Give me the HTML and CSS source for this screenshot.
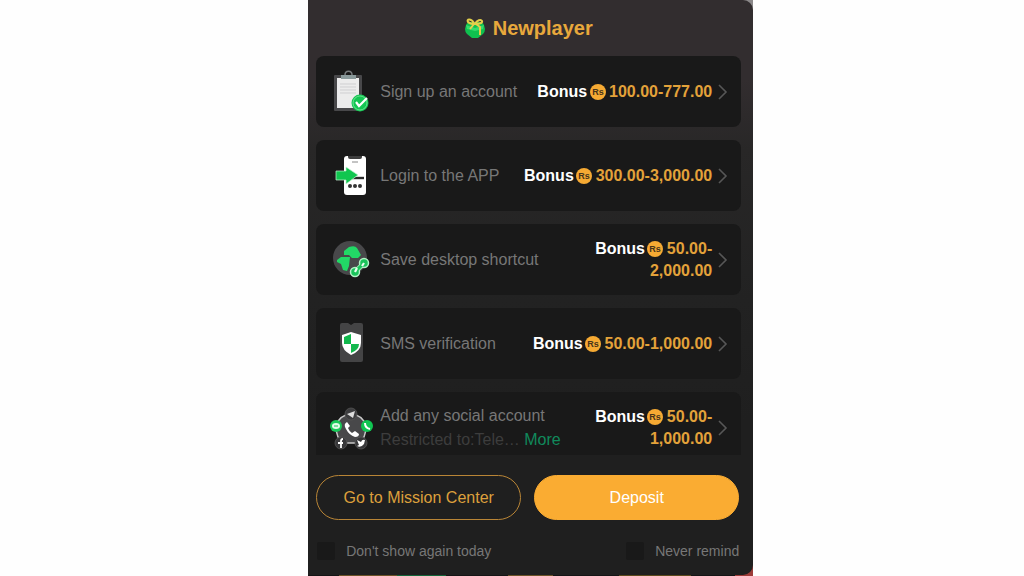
FILE: index.html
```html
<!DOCTYPE html>
<html lang="en">
<head>
    <meta charset="UTF-8">
    <meta name="viewport" content="width=device-width, initial-scale=1.0">
    <title>Newplayer</title>
    <link rel="stylesheet" href="styles.css">
</head>
<body>
    <!-- shared symbols -->
    <svg class="symbols" aria-hidden="true">
        <symbol id="coin" viewBox="0 0 16 16">
            <circle cx="8" cy="8" r="8" fill="#f6aa33"/>
            <text x="8" y="11" text-anchor="middle" font-size="9" font-weight="bold" fill="#47341a">Rs</text>
        </symbol>
        <symbol id="arrow" viewBox="0 0 10 18">
            <path d="M1 2l7 7-7 7" fill="none" stroke="#575757" stroke-width="1.6"/>
        </symbol>
    </svg>

    <div class="backdrop">
        <main class="dialog">
            <h1>
                <svg class="gift" viewBox="0 0 20 20" aria-hidden="true">
                    <path d="M1 7q1-3 5-3h8q4 0 5 3l1 4q0 3-2 5l-5 4H7l-5-4q-2-2-2-5z" fill="#0fc04f"/>
                    <path d="M1 7l9 3 9-3-1 4-8 2-8-2z" fill="#35dc6c"/>
                    <path d="M9 5C6 0 1 1 3 4c1 1 4 2 7 2 4 0 8-1 7-3-1-2-5-1-7 3M9 6l-4 5M11 6l4 3v8" fill="none" stroke="#e3cf4b" stroke-width="2"/>
                </svg>
                Newplayer
            </h1>

            <div class="missions">
                <section class="mission">
                    <svg class="icon" viewBox="0 0 44 44" aria-hidden="true">
                        <rect x="4" y="5" width="28" height="36" rx="1" fill="#48484a"/>
                        <path d="M7 8h22v30H7z" fill="#ececec"/>
                        <path d="M10 14h16M10 17h16M10 20h16M10 23h16" stroke="#cfcfd1"/>
                        <path d="M15 5c0-5 7-5 7 0" fill="none" stroke="#777b7d" stroke-width="1.5"/>
                        <path d="M11 5h15v4H11z" fill="#8a9a9b"/>
                        <circle cx="30" cy="33" r="8.500" fill="#14c653"/>
                        <circle cx="30" cy="33" r="7" fill="none" stroke="#7be79d" stroke-width=".8"/>
                        <path d="M26 32l3 4 8-8" fill="none" stroke="#fff" stroke-width="2.2"/>
                    </svg>
                    <div class="name">Sign up an account</div>
                    <div class="bonus"><span>Bonus <svg class="coin" aria-hidden="true"><use href="#coin"/></svg> <b>100.00-</b></span><wbr><b>777.00</b></div>
                    <svg class="arrow" aria-hidden="true"><use href="#arrow"/></svg>
                </section>

                <section class="mission">
                    <svg class="icon" viewBox="0 0 44 44" aria-hidden="true">
                        <rect x="14" y="2" width="22" height="39" rx="3" fill="#fff"/>
                        <path d="M18 2h14v1q0 2-2 2H20q-2 0-2-2z" fill="#3d3d3d"/>
                        <path d="M22 8h6" stroke="#888"/>
                        <path d="M22 24h12" stroke="#2b2b2b" stroke-width="2.4"/>
                        <circle cx="20" cy="32" r="2" fill="#333"/>
                        <circle cx="25" cy="32" r="2" fill="#333"/>
                        <circle cx="30" cy="32" r="2" fill="#333"/>
                        <path d="M6 17h10v-4l12 8-12 9v-4H6z" fill="#10c64f" stroke="#c6f3d3" stroke-width=".7"/>
                    </svg>
                    <div class="name">Login to the APP</div>
                    <div class="bonus"><span>Bonus <svg class="coin" aria-hidden="true"><use href="#coin"/></svg> <b>300.00-</b></span><wbr><b>3,000.00</b></div>
                    <svg class="arrow" aria-hidden="true"><use href="#arrow"/></svg>
                </section>

                <section class="mission">
                    <svg class="icon" viewBox="0 0 44 44" aria-hidden="true">
                        <circle cx="20" cy="20" r="17" fill="#48484a"/>
                        <path d="M14 13l5-4q6-2 8 1l4 7-3 3h-6l-3-3h-5z" fill="#22d866"/>
                        <path d="M7 22l4-3h9l-1 9-2 5-4-1-2-6-4-2z" fill="#22d866"/>
                        <path d="M25 34l9-9" stroke="#8cedab" stroke-width="5"/>
                        <circle cx="25" cy="34" r="4.500" fill="#1ac45a" stroke="#b1f2c5" stroke-width="1.5"/>
                        <circle cx="34" cy="25" r="4.500" fill="#1ac45a" stroke="#b1f2c5" stroke-width="1.5"/>
                        <path d="M25 34l9-9" stroke="#1ac45a" stroke-width="3"/>
                        <path d="M25 34l2-4M32 28l2-3" stroke="#eafff0" stroke-width="2.2"/>
                    </svg>
                    <div class="name">Save desktop shortcut</div>
                    <div class="bonus"><span>Bonus <svg class="coin" aria-hidden="true"><use href="#coin"/></svg> <b>50.00-</b></span><wbr><b>2,000.00</b></div>
                    <svg class="arrow" aria-hidden="true"><use href="#arrow"/></svg>
                </section>

                <section class="mission">
                    <svg class="icon" viewBox="0 0 44 44" aria-hidden="true">
                        <rect x="10" y="1" width="23" height="39" rx="2" fill="#444445"/>
                        <path d="M18 1l3 2 3-2z" fill="#191919"/>
                        <path d="M21 10l10 3v8q0 8-10 12-9-5-9-12v-8z" fill="#fff"/>
                        <path d="M21 12v10h-7v-7zM21 22h8q0 6-8 9z" fill="#12b84d"/>
                    </svg>
                    <div class="name">SMS verification</div>
                    <div class="bonus"><span>Bonus <svg class="coin" aria-hidden="true"><use href="#coin"/></svg> <b>50.00-</b></span><wbr><b>1,000.00</b></div>
                    <svg class="arrow" aria-hidden="true"><use href="#arrow"/></svg>
                </section>

                <section class="mission">
                    <svg class="icon" viewBox="0 0 44 44" aria-hidden="true">
                        <path d="M21 8q12 1 15 12 0 12-7 17H13Q6 32 6 20 9 9 21 8z" fill="#48484a" stroke="#c9c9c9" stroke-width="1.4"/>
                        <path d="M17 16q-4 2-1 7 3 6 9 8 4 0 4-3l-4-3-3 2q-3-2-4-5l2-2z" fill="#fff"/>
                        <circle cx="21" cy="8" r="6" fill="#3d3d3f" stroke="#555" stroke-width=".8"/>
                        <path d="M17 8l8-3-2 7-3-2z" fill="#ddd"/>
                        <circle cx="6" cy="20" r="6" fill="#19c858"/>
                        <ellipse cx="6" cy="20" rx="4" ry="3" fill="#e4fbea"/>
                        <path d="M4 20h4" stroke="#19c858"/>
                        <circle cx="37" cy="20" r="6" fill="#10c552"/>
                        <path d="M35 17q0 5 5 6" fill="none" stroke="#fff" stroke-width="2"/>
                        <circle cx="11" cy="37" r="6" fill="#38383a" stroke="#555" stroke-width=".8"/>
                        <path d="M13 33q-2 0-2 2v7M8 37h5" fill="none" stroke="#fff" stroke-width="1.8"/>
                        <circle cx="31" cy="37" r="6" fill="#38383a" stroke="#555" stroke-width=".8"/>
                        <path d="M27 34l4 2q1-3 4-2l-1 4q-3 4-7 2l2-1z" fill="#fff"/>
                    </svg>
                    <div class="name">
                        Add any social account
                        <p class="limit">Restricted to:Tele… <a href="#more">More</a></p>
                    </div>
                    <div class="bonus"><span>Bonus <svg class="coin" aria-hidden="true"><use href="#coin"/></svg> <b>50.00-</b></span><wbr><b>1,000.00</b></div>
                    <svg class="arrow" aria-hidden="true"><use href="#arrow"/></svg>
                </section>
            </div>

            <div class="buttons">
                <button type="button" class="btn">Go to Mission Center</button>
                <button type="button" class="btn btn-deposit">Deposit</button>
            </div>

            <div class="options">
                <label><input type="checkbox"> Don't show again today</label>
                <label><input type="checkbox"> Never remind</label>
            </div>
        </main>
    </div>
</body>
</html>
```
FILE: styles.css
```css
* {
    box-sizing: border-box;
}

body {
    margin: 0;
    background: #fefefe;
    font-family: "Liberation Sans", Arial, sans-serif;
    font-size: 16px;
    line-height: 22px;
}

.symbols {
    display: none;
}

/* strip of the page that shows under the dialog */
.backdrop {
    max-width: 445px;
    margin-left: 30.1%;
    padding-bottom: 1px;
    background:
        linear-gradient(#8b8889, #8b8889) top / 100% 50% no-repeat,
        linear-gradient(90deg, #151515 7%, #6b5226 7% 20%, #14653a 20% 31%, #151515 31% 45%, #6b5226 45% 55%, #151515 55% 70%, #5c4a1c 70% 86%, #151515 86% 96%, #9c3b38 96%);
}

.dialog {
    padding: 0 12px 13px 8px;
    background: linear-gradient(#322d2f 0, #322d2f 80px, #282727 150px, #222222 300px, #1f1f1f 420px);
    border-radius: 0 10px 10px 0;
}

h1 {
    display: flex;
    align-items: center;
    justify-content: center;
    gap: 8px;
    height: 56px;
    margin: 0;
    color: #e8a83c;
    font-size: 20px;
}

.gift {
    width: 20px;
    height: 20px;
}

/* Mission list */
.missions {
    display: flex;
    flex-direction: column;
    gap: 13px;
    height: 399px;
    overflow: hidden;
}

.mission {
    display: flex;
    flex: none;
    align-items: center;
    min-height: 71px;
    padding: 0 13px 0 14px;
    background: #191919;
    border-radius: 8px;
}

.icon {
    flex: none;
    width: 44px;
    height: 44px;
    margin-right: 6px;
}

.name {
    flex: none;
    color: #777777;
}

.limit {
    margin: 2px 0 0;
    color: #3d3d3d;
}

.limit a {
    color: #108a5c;
    text-decoration: none;
}

.bonus {
    flex: 1;
    color: #ffffff;
    font-weight: bold;
    text-align: right;
}

.bonus span {
    white-space: nowrap;
}

.bonus b {
    color: #e3a23a;
}

.coin {
    width: 16px;
    height: 16px;
    margin: 0 -1px 0 -2px;
    vertical-align: -3px;
}

.arrow {
    flex: none;
    width: 10px;
    height: 18px;
    margin-left: 6px;
}

/* Bottom */
.buttons {
    display: flex;
    gap: 13px;
    margin: 20px 2px 0 0;
}

.btn {
    flex: 1;
    height: 45px;
    padding: 0;
    border: 1px solid #b98536;
    border-radius: 23px;
    background: none;
    color: #dda03c;
    font: inherit;
}

.btn-deposit {
    border-color: #faac32;
    background: #faac32;
    color: #ffffff;
}

.options {
    display: flex;
    justify-content: space-between;
    margin: 20px 2px 0 0;
    color: #777777;
    font-size: 14px;
}

.options label {
    display: flex;
    align-items: center;
    gap: 11px;
}

.options input {
    appearance: none;
    width: 18px;
    height: 18px;
    margin: 0 0 0 1px;
    background: #191919;
    border-radius: 2px;
}

.options input:checked {
    background: #faac32;
}
```
